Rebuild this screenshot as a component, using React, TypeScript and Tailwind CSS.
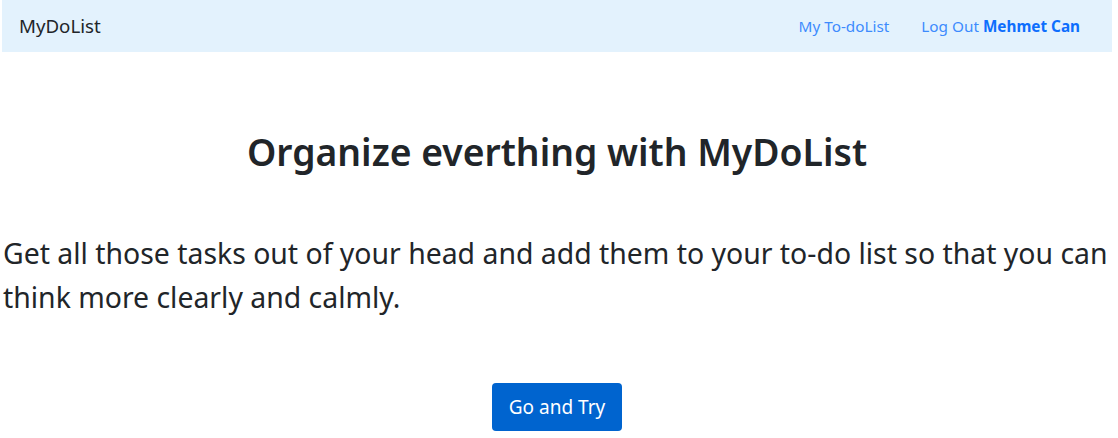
import React from "react";

export default function App() {
  return (
    <div className="w-[1118px] h-[438px] bg-white overflow-hidden" style={{ fontFamily: '"Noto Sans", "Open Sans", sans-serif' }}>
      <nav className="ml-[2px] mr-[6px] h-[52px] bg-[#e3f2fd] flex items-center justify-between pl-[17px] pr-[32px]">
        <span className="text-[18.7px] text-[#212529]">MyDoList</span>
        <div className="flex items-center gap-[32px] text-[15.3px]">
          <a className="text-[#3d8bfd]">My To-doList</a>
          <a className="text-[#3d8bfd]">
            Log Out <span className="font-bold text-[#0d6efd]">Mehmet Can</span>
          </a>
        </div>
      </nav>
      <main className="flex flex-col items-center pr-[4px]">
        <h1 className="mt-[72px] text-[37.3px] leading-[56px] font-semibold text-[#212529]">Organize everthing with MyDoList</h1>
        <p className="mt-[51px] self-stretch pl-[3px] mr-[-4px] text-[28.4px] leading-[44px] text-[#212529]">
          Get all those tasks out of your head and add them to your to-do list so that you can think more clearly and calmly.
        </p>
        <button className="mt-[64px] h-[48px] px-[17px] rounded-[4px] bg-[#0064cf] text-white text-[19px]">Go and Try</button>
      </main>
    </div>
  );
}
